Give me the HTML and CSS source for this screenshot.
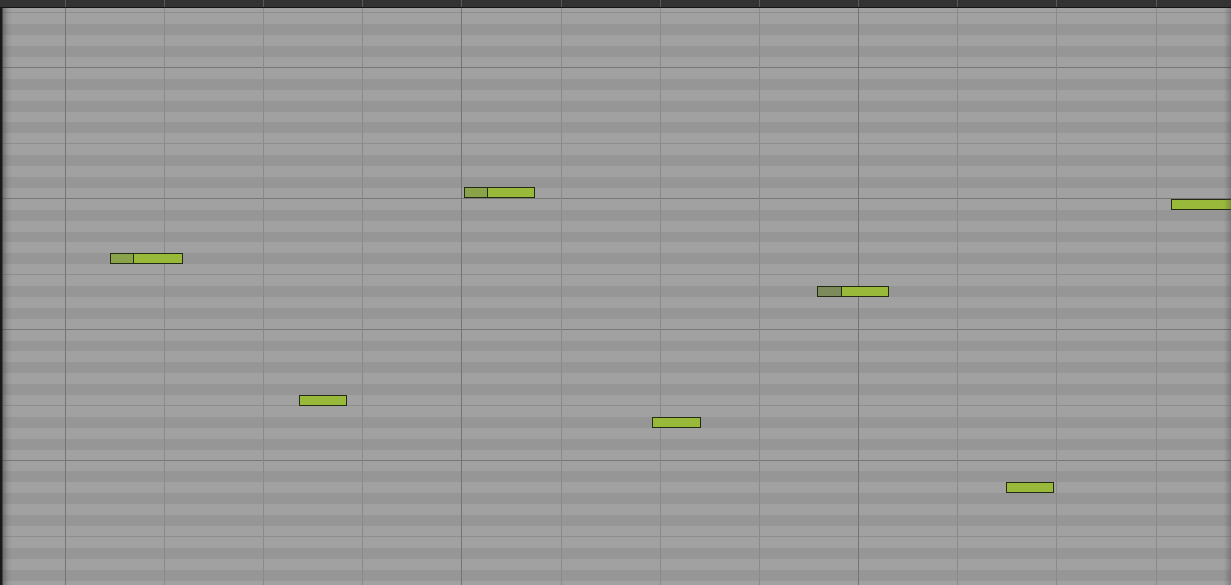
FILE: index.html
```html
<!DOCTYPE html>
<html>
<head>
<meta charset="utf-8">
<link rel="stylesheet" href="styles.css">
</head>
<body>
<div class="roll">
  <div class="header">
    <div class="hcol first"></div>
    <div class="hcol bar"></div><div class="hcol"></div><div class="hcol"></div><div class="hcol"></div>
    <div class="hcol bar"></div><div class="hcol"></div><div class="hcol"></div><div class="hcol"></div>
    <div class="hcol bar"></div><div class="hcol"></div><div class="hcol"></div><div class="hcol"></div>
    <div class="hcol bar"></div>
  </div>
  <div class="grid">
    <div class="rows">
      <div class="row w fline"></div>
      <div class="row w"></div><div class="row b"></div><div class="row w"></div><div class="row b"></div><div class="row w cline"></div>
      <div class="row w"></div><div class="row b"></div><div class="row w"></div><div class="row b"></div><div class="row w"></div><div class="row b"></div><div class="row w fline"></div>
      <div class="row w"></div><div class="row b"></div><div class="row w"></div><div class="row b"></div><div class="row w cline"></div>
      <div class="row w"></div><div class="row b"></div><div class="row w"></div><div class="row b"></div><div class="row w"></div><div class="row b"></div><div class="row w fline"></div>
      <div class="row w"></div><div class="row b"></div><div class="row w"></div><div class="row b"></div><div class="row w cline"></div>
      <div class="row w"></div><div class="row b"></div><div class="row w"></div><div class="row b"></div><div class="row w"></div><div class="row b"></div><div class="row w fline"></div>
      <div class="row w"></div><div class="row b"></div><div class="row w"></div><div class="row b"></div><div class="row w cline"></div>
      <div class="row w"></div><div class="row b"></div><div class="row w"></div><div class="row b"></div><div class="row w"></div><div class="row b"></div><div class="row w fline"></div>
      <div class="row w"></div><div class="row b"></div><div class="row w"></div><div class="row b"></div><div class="row w cline"></div>
    </div>
    <div class="beats">
      <div class="col first"></div>
      <div class="col bar"></div><div class="col"></div><div class="col"></div><div class="col"></div>
      <div class="col bar"></div><div class="col"></div><div class="col"></div><div class="col"></div>
      <div class="col bar"></div><div class="col"></div><div class="col"></div><div class="col"></div>
      <div class="col bar"></div>
    </div>
    <div class="note" style="left:110px;top:245px;width:73px"><span class="lead" style="width:22px"></span></div>
    <div class="note" style="left:464px;top:179px;width:71px"><span class="lead" style="width:22px"></span></div>
    <div class="note" style="left:817px;top:278px;width:72px"><span class="lead dim" style="width:23px"></span></div>
    <div class="note" style="left:1171px;top:191px;width:70px"></div>
    <div class="note" style="left:299px;top:387px;width:48px"></div>
    <div class="note" style="left:652px;top:409px;width:49px"></div>
    <div class="note" style="left:1006px;top:474px;width:48px"></div>
    <div class="shade-left"></div>
    <div class="shade-right"></div>
  </div>
</div>
</body>
</html>
```
FILE: styles.css
```css
html, body {
  margin: 0;
  padding: 0;
  background: #a1a1a1;
  overflow: hidden;
}

.roll {
  width: 1231px;
  height: 585px;
  display: flex;
  flex-direction: column;
  overflow: hidden;
}

.header {
  height: 7px;
  flex: none;
  background: #333333;
  border-bottom: 1px solid #141414;
  display: flex;
}

.hcol {
  flex: none;
  width: 99.2px;
  box-sizing: border-box;
  border-left: 1px solid #5a5a5a;
}

.hcol.first {
  width: 64.6px;
  border-left: none;
}

.grid {
  position: relative;
  flex: 1;
  overflow: hidden;
}

.rows {
  display: grid;
  grid-template-rows: 5.4px repeat(53, 10.917px);
}

.row {
  box-sizing: border-box;
}

.row.w {
  background: #a1a1a1;
}

.row.b {
  background: #969696;
}

.row.fline {
  border-bottom: 1px solid #8d8d8d;
}

.row.cline {
  border-bottom: 1px solid #777777;
}

.beats {
  position: absolute;
  inset: 0;
  display: flex;
}

.col {
  flex: none;
  width: 99.2px;
  box-sizing: border-box;
  border-left: 1px solid #8a8a8a;
}

.col.bar {
  border-left-color: #747474;
}

.col.first {
  width: 64.6px;
  border-left: none;
}

.note {
  position: absolute;
  height: 11px;
  box-sizing: border-box;
  background: #99b93b;
  border: 1px solid #232c12;
  display: flex;
}

.lead {
  height: 100%;
  background: #8aa34b;
  border-right: 1px solid #232c12;
}

.lead.dim {
  background: #7c8a5c;
}

.shade-left {
  position: absolute;
  left: 0;
  top: 0;
  bottom: 0;
  width: 12px;
  background: linear-gradient(to right, #1a1a1a 0, #1a1a1a 2px, rgba(60,60,60,0.45) 3px, rgba(90,90,90,0.15) 8px, rgba(120,120,120,0) 12px);
}

.shade-right {
  position: absolute;
  right: 0;
  top: 0;
  bottom: 0;
  width: 7px;
  background: linear-gradient(to right, rgba(90,90,90,0) 0, rgba(70,70,70,0.35) 100%);
}
```
